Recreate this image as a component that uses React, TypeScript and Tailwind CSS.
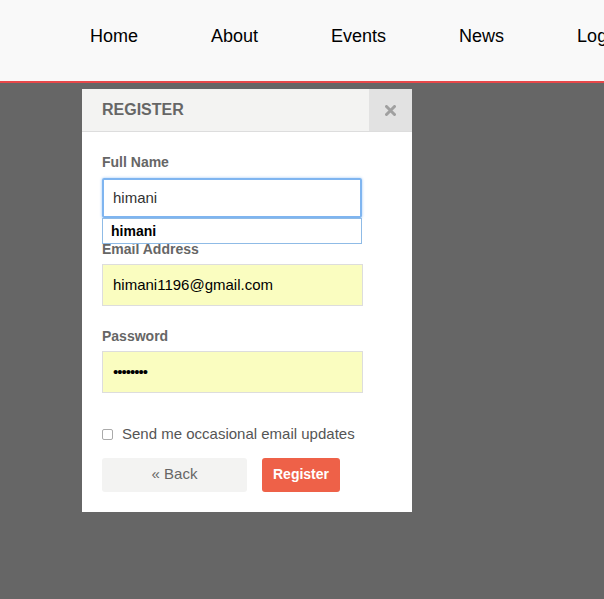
import React from "react";

export default function App() {
  const font = { fontFamily: '"Liberation Sans", Arial, Helvetica, sans-serif' };
  return (
    <div className="w-[604px] h-[599px] bg-[#666666] overflow-hidden" style={font}>
      <nav className="h-[83px] bg-[#f9f9f9] border-b-2 border-[#e8484a] flex items-start pl-[90px] pt-[23px] gap-[73px] text-[18px] text-black whitespace-nowrap">
        <span>Home</span>
        <span>About</span>
        <span>Events</span>
        <span>News</span>
        <span>Login</span>
      </nav>
      <div className="ml-[82px] mt-[6px] w-[330px] bg-white">
        <div className="h-[43px] flex bg-[#f3f3f2] border-b border-[#dddddd]">
          <div className="flex-1 pl-[20px] flex items-center text-[16px] font-bold text-[#666666]">REGISTER</div>
          <div className="w-[43px] bg-[#e2e2e2] flex items-center justify-center">
            <svg width="11" height="11" viewBox="0 0 11 11">
              <path d="M1.5 1.5 L9.5 9.5 M9.5 1.5 L1.5 9.5" stroke="#a0a0a0" strokeWidth="3" strokeLinecap="round" />
            </svg>
          </div>
        </div>
        <div className="px-[20px] pt-[22px] pb-[20px]">
          <div className="relative">
            <label className="block text-[14px] font-bold text-[#666666] leading-[16px]">Full Name</label>
            <div className="mt-[8px] h-[40px] w-[260px] border-2 border-[#7fb5f0] rounded-[2px] shadow-[0_0_3px_#9cc6f5] flex items-center pl-[9px] text-[15px] text-[#333]">himani</div>
            <div className="absolute left-0 top-[64px] z-10 w-[260px] h-[26px] bg-white border border-[#8fbbe6] flex items-center pl-[8px] text-[14px] font-bold text-black">himani</div>
          </div>
          <label className="block mt-[23px] text-[14px] font-bold text-[#666666] leading-[16px]">Email Address</label>
          <div className="mt-[7px] h-[42px] w-[261px] bg-[#fafdc0] border border-[#dddddd] flex items-center pl-[10px] text-[15px] text-black">himani1196@gmail.com</div>
          <label className="block mt-[22px] text-[14px] font-bold text-[#666666] leading-[16px]">Password</label>
          <div className="mt-[7px] h-[42px] w-[261px] bg-[#fafdc0] border border-[#dddddd] flex items-center pl-[10px] text-[15px] text-black tracking-[-1px]">••••••••</div>
          <div className="mt-[30px] flex items-center gap-[9px]">
            <div className="w-[11px] h-[11px] border border-[#aaaaaa] rounded-[2px] bg-white" />
            <span className="text-[15px] text-[#555555]">Send me occasional email updates</span>
          </div>
          <div className="mt-[12px] flex gap-[15px]">
            <div className="w-[145px] h-[34px] bg-[#f3f3f2] rounded-[3px] flex items-center justify-center text-[15px] text-[#666666]">« Back</div>
            <div className="w-[78px] h-[34px] bg-[#ee6148] rounded-[3px] flex items-center justify-center text-[14px] font-bold text-white">Register</div>
          </div>
        </div>
      </div>
    </div>
  );
}
